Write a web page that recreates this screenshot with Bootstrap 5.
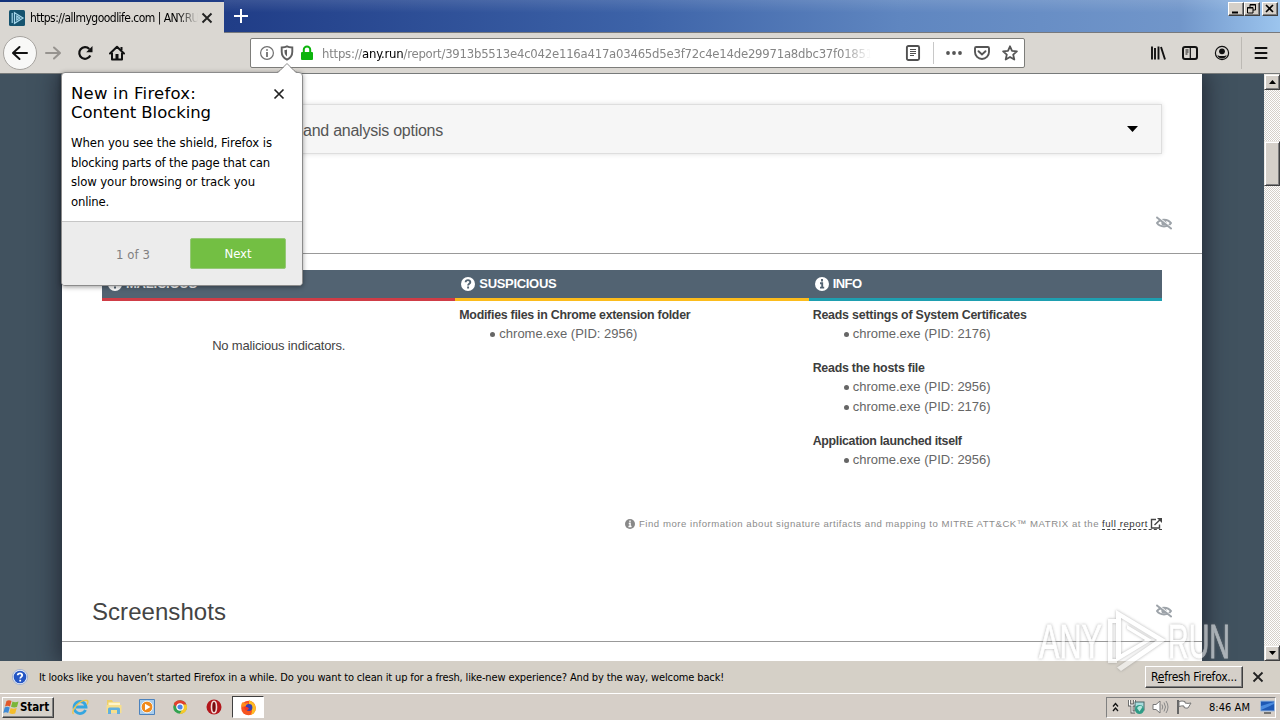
<!DOCTYPE html>
<html lang="en">
<head>
<meta charset="utf-8">
<title>ANY.RUN report</title>
<link href="https://cdn.jsdelivr.net/npm/bootstrap@5.3.0/dist/css/bootstrap.min.css" rel="stylesheet">
<style>
:root{--face:#d5d0c9;--chrome:#dad7d2}
body{width:1280px;height:720px;overflow:hidden;background:#d5cfc8;font-family:"DejaVu Sans Condensed","DejaVu Sans",sans-serif;font-stretch:condensed;font-size:11px;line-height:14px;color:#000}
svg{display:block;flex:none}
[data-w]{white-space:nowrap}
.titlebar{height:33px;background:linear-gradient(90deg,#12327a 0,#213e88 240px,#3d63a8 640px,#5f86c0 900px,#7196ca 1180px,#9cc5ee 1280px);border-bottom:1px solid #77797d}
.titlebar::before{content:"";position:absolute;left:224px;right:0;top:0;height:32px;background:linear-gradient(#ffffff1c,#fff0 40%)}
.tab-top{width:224px;height:31px;margin-top:2px;background:var(--chrome);position:relative;padding-left:9px}
.tab-label{width:168px;overflow:hidden;font-size:12px;margin-left:5px;-webkit-mask-image:linear-gradient(90deg,#000 148px,transparent 168px)}
.newtab{margin-left:9px}
.winbtn{width:16px;height:14px;background:var(--face);border:1px solid;border-color:#fff #404040 #404040 #fff;box-shadow:inset -1px -1px #808080}
.toolbar{height:41px;background:var(--chrome);border-bottom:1px solid #777a7a;padding-left:3px}
.backbtn{width:34px;height:34px;border-radius:50%;background:#f8f8f7;border:1px solid #a6a39f}
.urlbar{width:775px;height:30px;margin-left:125px;background:#fff;border:1px solid #7d7d7a;border-radius:2px;font-size:13px}
.urltext{width:550px;height:20px;line-height:21px;overflow:hidden;color:#858585;-webkit-mask-image:linear-gradient(90deg,#000 520px,transparent 549px)}
.viewport{height:587px;background:#41525f;overflow:hidden}
.sheet{width:1140px;margin-left:62px;background:#fff;box-shadow:0 0 22px 3px #1c202bd0;font-family:"Liberation Sans",Arial,sans-serif;font-size:13px;color:#666}
.option-panel{height:50px;margin:30px 40px 0;background:#f6f6f6;border:1px solid #dedede;box-shadow:0 0 5px #0002;font-size:16px;color:#555;padding:0 23px 0 200px}
.section-head{height:62px;border-bottom:1px solid #999;padding:0 30px;color:#444}
.ind-table{margin:16px 40px 0;height:240px}
.ind-head{height:31px;background:#526372;color:#fff;font-weight:700;border-bottom:3px solid;padding:0 0 1px 5px;gap:3px}
.b-red{border-color:#cf3c46}.b-amber{border-color:#fcbc1c}.b-teal{border-color:#1e9fb0}
.sig{padding:5px 0 0 4px}
.sig h6{font-size:12.4px;font-weight:700;line-height:19px;margin:0;color:#3d3d3d}
.sig ul{margin:-1px 0 15px;padding-left:40px;list-style:none}
.sig ul:not(:last-child){margin-bottom:15px}
.sig li{height:20px;line-height:20px;position:relative}
.sig li::before{content:"";position:absolute;left:-9px;top:8px;width:5px;height:5px;border-radius:50%;background:#666}
.more{height:28px;margin:0 40px;font-size:9.6px;color:#8c8c8c}
.more a{color:#333;text-decoration:none;border-bottom:1px dashed #444;height:12px;line-height:11px}
.scroller{width:16px;background:repeating-conic-gradient(#fff 0 25%,#d5d0c9 0 50%) 0 0/2px 2px}
.sbtn{width:16px;background:var(--face);border:1px solid;border-color:#ece9e4 #404040 #404040 #ece9e4;box-shadow:inset 1px 1px #fff,inset -1px -1px #808080}
.popup{left:61px;top:72px;width:242px;height:214px;background:#fff;border:1px solid #8b8b8b;border-radius:4px;box-shadow:0 1px 5px #0006;z-index:5;font-size:13px}
.popup .arrow{left:214px;top:-10px}
.popup h5{font-family:"DejaVu Sans",sans-serif;font-stretch:normal;font-size:16.5px;line-height:19px;font-weight:400;margin:0}
.popup p{line-height:19.7px;margin:11px 0 0}
.popup-foot{height:64px;background:#ececec;border-top:1px solid #c6c6c6;border-radius:0 0 3px 3px;color:#808080}
.nextbtn{width:96px;height:31px;background:#73bf43;border:1px solid #96c878;border-radius:2px;color:#fff;font-size:13px;padding:0}
.notice{height:32px;background:#d5d0c7;padding:0 16px 0 12px}
.raised{background:var(--face);border:1px solid;border-color:#fff #404040 #404040 #fff;box-shadow:inset -1px -1px #808080}
.refresh{width:98px;height:22px;font-size:12px}
.taskbar{height:27px;background:#d6cfc8;border-top:1px solid #fff;padding-left:2px}
.startbtn{width:52px;height:21px;font-size:11.5px;font-weight:700}
.active-task{width:32px;height:22px;background:#fff;border:1px solid;border-color:#404040 #fff #fff #404040}
.tray{width:170px;height:21px;border:1px solid;border-color:#808080 #fff #fff #808080}
.watermark{left:1036px;top:606px;z-index:6;width:200px;height:68px;pointer-events:none;opacity:.56;filter:drop-shadow(0 0 1.5px #777)}
</style>
</head>
<body class="d-flex flex-column position-relative">

<header class="titlebar d-flex flex-shrink-0 position-relative">
  <div class="tab-top d-flex align-items-center">
    <svg width="16" height="16" viewBox="0 0 16 16"><rect width="16" height="16" rx="1.500" fill="#15536f"/><path d="M3.200 3v10M5.500 2.700l8.500 5.300-8.500 5.300zM7.800 6l3 2-3 2z" fill="none" stroke="#a5d6ea" stroke-width="1.200"/></svg>
    <div class="tab-label"><span data-w="169">https://allmygoodlife.com | ANY.RU</span></div>
    <svg style="margin-left:3px" width="12" height="12" viewBox="0 0 12 12"><path d="M1.500 1.500l9 9M10.500 1.500l-9 9" stroke="#222" stroke-width="1.900"/></svg>
  </div>
  <svg class="newtab mt-2 position-relative" width="16" height="16" viewBox="0 0 16 16"><path d="M8 1v14M1 8h14" stroke="#fff" stroke-width="2"/></svg>
  <div class="d-flex ms-auto position-relative" style="padding:2px 2px 0 0">
    <div class="winbtn"><svg width="14" height="12"><path d="M3 9.500h6" stroke="#000" stroke-width="2"/></svg></div>
    <div class="winbtn"><svg width="14" height="12"><path d="M5 4V1.500h5.500V7H8M5 2h6M2.500 4.500H8V10H2.500zM2 5h6" fill="none" stroke="#000"/></svg></div>
    <div class="winbtn" style="margin-left:2px"><svg width="14" height="12"><path d="M3 2l7 7M10 2l-7 7" stroke="#000" stroke-width="1.600"/></svg></div>
  </div>
</header>

<nav class="toolbar d-flex align-items-center flex-shrink-0">
  <div class="backbtn d-flex align-items-center justify-content-center"><svg width="18" height="16" viewBox="0 0 18 16"><path d="M16 8H2.500M8.500 2L2 8l6.500 6" fill="none" stroke="#111" stroke-width="2" stroke-linecap="round" stroke-linejoin="round"/></svg></div>
  <svg style="margin-left:7px" width="18" height="16" viewBox="0 0 18 16"><path d="M2 8h13.500M10 2.500L16 8l-6 5.500" fill="none" stroke="#96938f" stroke-width="2" stroke-linecap="round" stroke-linejoin="round"/></svg>
  <svg style="margin-left:15px" width="16" height="16" viewBox="0 0 16 16"><path d="M13.300 10.500A5.800 5.800 0 1 1 12.300 4" fill="none" stroke="#111" stroke-width="2.200"/><path d="M15.500 1v6.300H9.200z" fill="#111"/></svg>
  <svg style="margin-left:16px" width="16" height="16" viewBox="0 0 16 16"><path d="M1 8.500L8 1.800l7 6.700M3 8v6.500h10V8" fill="none" stroke="#111" stroke-width="2" stroke-linejoin="round" stroke-linecap="round"/><path d="M6.500 9h3v6h-3zM11.500 2h2v3h-2z" fill="#111"/></svg>
  <div class="urlbar d-flex align-items-center ps-2">
    <svg width="16" height="16" viewBox="0 0 16 16"><circle cx="8" cy="8" r="6.400" fill="none" stroke="#707070" stroke-width="1.200"/><path d="M8 7v5M8 4.200v1.600" stroke="#707070" stroke-width="1.800"/></svg>
    <svg class="ms-1" width="16" height="16" viewBox="0 0 16 16"><path d="M8 1.400c1.600.8 3.300 1 5.300 1.100v4.200c0 3.300-2 6.300-5.300 7.900-3.300-1.600-5.300-4.600-5.300-7.900V2.500C4.700 2.400 6.400 2.200 8 1.400z" fill="none" stroke="#606060" stroke-width="1.900"/><path d="M8 4.500v7C6.200 10 5.500 8.500 5.500 6.500V5C6.500 5 7.200 4.900 8 4.500z" fill="#606060"/></svg>
    <svg class="ms-1" width="16" height="16" viewBox="0 0 16 16"><path d="M4.800 8V4.600a3.200 3.200 0 0 1 6.400 0V8" fill="none" stroke="#0cb40c" stroke-width="2"/><rect x="2" y="7" width="12" height="8" rx="1" fill="#0cb40c"/></svg>
    <div class="urltext" style="margin-left:7px"><span data-w="551">https://<span class="text-black">any.run</span>/report/3913b5513e4c042e116a417a03465d5e3f72c4e14de29971a8dbc37f01851</span></div>
    <svg style="margin-left:33px" width="16" height="16" viewBox="0 0 16 16"><rect x="1.900" y="1" width="12.200" height="14" rx="1.500" fill="none" stroke="#505050" stroke-width="1.900"/><path d="M5 4.500h6M5 6.500h6M5 8.500h6M5 10.500h4" stroke="#505050"/></svg>
    <div style="width:1px;height:22px;background:#c8c8c8;margin:0 11px 0 12px"></div>
    <svg width="18" height="16" viewBox="0 0 18 16"><g fill="#555"><circle cx="3" cy="8" r="1.900"/><circle cx="9" cy="8" r="1.900"/><circle cx="15" cy="8" r="1.900"/></g></svg>
    <svg style="margin-left:11px" width="16" height="16" viewBox="0 0 16 16"><path d="M2.200 2h11.600q1.200 0 1.200 1.200V7a7 7 0 0 1-14 0V3.200Q1 2 2.200 2z" fill="none" stroke="#555" stroke-width="1.900"/><path d="M4.500 6.200L8 9.500l3.500-3.300" fill="none" stroke="#555" stroke-width="1.900" stroke-linecap="round"/></svg>
    <svg style="margin-left:12px" width="16" height="16" viewBox="0 0 16 16"><path d="M8 1.300l2 4.500 4.900.5-3.700 3.300 1.100 4.900L8 12l-4.300 2.500 1.100-4.900L1.100 6.300 6 5.800z" fill="none" stroke="#555" stroke-width="1.800" stroke-linejoin="round"/></svg>
  </div>
  <svg style="margin-left:125px" width="16" height="16" viewBox="0 0 16 16"><path d="M2 1.500v13M5 3v11.500M8.500 1.500v13M11 2l4 12.500" stroke="#111" stroke-width="1.900"/></svg>
  <svg style="margin-left:16px" width="16" height="16" viewBox="0 0 16 16"><rect x="1" y="2" width="14" height="12" rx="2" fill="none" stroke="#111" stroke-width="2"/><path d="M8.300 2v12M3.500 5h3M3.500 7h3M3.500 9h2" stroke="#111" stroke-width="1.200"/></svg>
  <svg style="margin-left:16px" width="16" height="16" viewBox="0 0 16 16"><circle cx="8" cy="8" r="6.600" fill="none" stroke="#111" stroke-width="1.200"/><circle cx="8" cy="6.300" r="2.900" fill="#111"/><path d="M3.300 10.200c3 1.200 6.400 1.200 9.400 0-1 2.300-2.600 3.200-4.700 3.200s-3.700-.9-4.700-3.200z" fill="#111"/></svg>
  <div style="width:1px;height:32px;background:#bcb9b4;margin-left:11px"></div>
  <svg style="margin-left:11px" width="16" height="16" viewBox="0 0 16 16"><path d="M2.500 3h11M2.500 8h11M2.500 13h11" stroke="#111" stroke-width="2" stroke-linecap="round"/></svg>
</nav>

<main class="viewport d-flex flex-shrink-0">
  <article class="sheet">
    <div style="height:1px;margin-bottom:-1px"></div>
    <div class="option-panel d-flex align-items-center justify-content-between">
      <span class="pt-1" style="line-height:18px" data-w="140">and analysis options</span>
      <svg width="11" height="6"><path d="M0 0h11L5.500 6z" fill="#000"/></svg>
    </div>
    <div class="section-head d-flex align-items-center justify-content-end" style="margin-top:38px">
      <svg width="16" height="14" viewBox="0 0 16 14"><path d="M1 7C4 2.500 12 2.500 15 7c-3 4.500-11 4.500-14 0z" fill="none" stroke="#9da3a9" stroke-width="2"/><circle cx="8" cy="7" r="2.600" fill="#9da3a9"/><path d="M1.600 .6l15 12" stroke="#fff" stroke-width="1.500"/><path d="M.3 1l15.400 12" stroke="#9da3a9" stroke-width="1.900"/></svg>
    </div>
    <div class="ind-table row g-0 align-content-start">
      <div class="col-4">
        <div class="ind-head b-red d-flex align-items-center"><svg width="16" height="16" viewBox="0 0 16 16"><circle cx="8" cy="8" r="7" fill="#fff"/><path d="M8 3.500v5.500M8 10.500v2" stroke="#526372" stroke-width="2"/></svg><span data-w="71">MALICIOUS</span></div>
        <div class="text-center" style="padding-top:37px;line-height:16px;color:#444"><span data-w="133">No malicious indicators.</span></div>
      </div>
      <div class="col-4">
        <div class="ind-head b-amber d-flex align-items-center"><svg width="16" height="16" viewBox="0 0 16 16"><circle cx="8" cy="8" r="7" fill="#fff"/><path d="M5.600 6.200C5.800 3.400 10.400 3.500 10.300 6.200c0 1.500-2.200 1.600-2.200 3.200M8.100 10.400v2" fill="none" stroke="#526372" stroke-width="1.900"/></svg><span data-w="77">SUSPICIOUS</span></div>
        <div class="sig"><h6><span data-w="231">Modifies files in Chrome extension folder</span></h6><ul><li><span data-w="138">chrome.exe (PID: 2956)</span></li></ul></div>
      </div>
      <div class="col-4">
        <div class="ind-head b-teal d-flex align-items-center"><svg width="16" height="16" viewBox="0 0 16 16"><circle cx="8" cy="8" r="7" fill="#fff"/><path d="M8 3v2.400M6 7.200h2.200v4M6 11.600h4.200" fill="none" stroke="#526372" stroke-width="1.900"/></svg><span data-w="29">INFO</span></div>
        <div class="sig">
          <h6><span data-w="214">Reads settings of System Certificates</span></h6><ul><li><span data-w="138">chrome.exe (PID: 2176)</span></li></ul>
          <h6><span data-w="112">Reads the hosts file</span></h6><ul><li><span data-w="138">chrome.exe (PID: 2956)</span></li><li><span data-w="138">chrome.exe (PID: 2176)</span></li></ul>
          <h6><span data-w="149">Application launched itself</span></h6><ul><li><span data-w="138">chrome.exe (PID: 2956)</span></li></ul>
        </div>
      </div>
    </div>
    <div class="more d-flex align-items-center justify-content-end">
      <svg width="10" height="10" viewBox="0 0 16 16"><circle cx="8" cy="8" r="8" fill="#888"/><path d="M8 2.500v2.600M6 7.200h2.200v4M5.500 12h5" fill="none" stroke="#fff" stroke-width="2.200"/></svg>
      <span class="ms-1" style="margin-right:3px" data-w="460">Find more information about signature artifacts and mapping to MITRE ATT&amp;CK™ MATRIX at the</span>
      <a href="#" class="d-flex"><span data-w="46">full report</span><svg style="margin-left:2px" width="12" height="11" viewBox="0 0 12 11"><path d="M6 1.500H1.500V10H9.500V6.500M4.500 7L10 1.800" fill="none" stroke="#444" stroke-width="1.400"/><path d="M7 0h5v5z" fill="#444"/></svg></a>
    </div>
    <div class="section-head d-flex align-items-center justify-content-between" style="margin-top:42px">
      <span style="font-size:24px;line-height:30px;padding-top:2px" data-w="134">Screenshots</span>
      <svg width="16" height="14" viewBox="0 0 16 14"><path d="M1 7C4 2.500 12 2.500 15 7c-3 4.500-11 4.500-14 0z" fill="none" stroke="#9da3a9" stroke-width="2"/><circle cx="8" cy="7" r="2.600" fill="#9da3a9"/><path d="M1.600 .6l15 12" stroke="#fff" stroke-width="1.500"/><path d="M.3 1l15.400 12" stroke="#9da3a9" stroke-width="1.900"/></svg>
    </div>
  </article>
  <div class="scroller ms-auto d-flex flex-column position-relative">
    <div class="sbtn d-flex align-items-center justify-content-center" style="height:16px"><svg width="7" height="4"><path d="M0 4h7L3.500 0z"/></svg></div>
    <div class="sbtn" style="height:45px;margin-top:51px"></div>
    <div class="sbtn d-flex align-items-center justify-content-center mt-auto" style="height:16px"><svg width="7" height="4"><path d="M0 0h7L3.500 4z"/></svg></div>
  </div>
</main>

<div class="notice d-flex align-items-center flex-shrink-0">
  <svg width="16" height="16" viewBox="0 0 16 16"><circle cx="8" cy="8" r="7" fill="#2456c4" stroke="#e8eefa" stroke-width="1.300"/><circle cx="8" cy="8" r="7.600" fill="none" stroke="#7d93bd" stroke-width=".6"/><path d="M5.700 6.300c.1-2.700 4.500-2.600 4.500 0 0 1.500-2 1.600-2 3.200M8.200 10.800v1.700" fill="none" stroke="#fff" stroke-width="1.800"/></svg>
  <span style="margin-left:11px;padding-top:2px" data-w="685">It looks like you haven’t started Firefox in a while. Do you want to clean it up for a fresh, like-new experience? And by the way, welcome back!</span>
  <div class="raised refresh d-flex align-items-center justify-content-center ms-auto"><span data-w="86">R<u>e</u>fresh Firefox...</span></div>
  <svg style="margin-left:9px" width="12" height="12" viewBox="0 0 12 12"><path d="M1.500 1.500l9 9M10.500 1.500l-9 9" stroke="#222" stroke-width="1.800"/></svg>
</div>

<footer class="taskbar d-flex align-items-center flex-shrink-0">
  <div class="raised startbtn d-flex align-items-center">
    <svg width="17" height="16" viewBox="0 0 17 16"><path d="M3.500 2Q6 .5 8.500 2L7 7.500Q4.500 6 2 7.500z" fill="#e2582a"/><path d="M9.500 2.500Q12 4 15.500 2.500L14 8Q11 9 8 7.700z" fill="#7bb63b"/><path d="M1.700 8.500Q4 7 6.700 8.500L5.200 14Q3 12.500.3 14z" fill="#3f8ad6"/><path d="M7.700 9Q10 10.300 13.700 9L12.200 14.500Q9 15.500 6.200 14z" fill="#f4bd2c"/></svg>
    <span data-w="29">Start</span>
  </div>
  <svg style="margin-left:17px" width="18" height="18" viewBox="0 0 18 18"><path d="M14.500 12A6 6 0 1 1 15 9H5" fill="none" stroke="#35a6e0" stroke-width="2.800"/><path d="M2.500 16C-1 13 9 1 16 2.500c1.500.5 1 2.500 0 4" fill="none" stroke="#edc64f" stroke-width="1.400"/></svg>
  <svg style="margin-left:16px" width="18" height="18" viewBox="0 0 18 18"><path d="M2 2h5l1 2h7v11H2z" fill="#edcf6b"/><path d="M3.500 4.500H15V9H3.500z" fill="#fff5c9"/><path d="M1.500 7h15v8h-15z" fill="#f7df8c"/><path d="M3 16v-5q0-1.500 1.500-1.500h9Q15 9.500 15 11v5h-3v-4H6v4z" fill="#62b0de"/></svg>
  <svg style="margin-left:15px" width="18" height="18" viewBox="0 0 18 18"><path d="M1.500 1.500h15v15h-15z" fill="#a9cdec" stroke="#4c82bd"/><circle cx="9" cy="9" r="5.800" fill="#f08a1c" stroke="#fff" stroke-width=".8"/><path d="M7 5.700v6.600L12.500 9z" fill="#fff"/></svg>
  <svg style="margin-left:16px" width="16" height="18" viewBox="0 0 16 18"><circle cx="8" cy="9" r="6.800" fill="#32a350"/><path d="M1.700 6A7 7 0 0 1 14.500 7L8 6.500 5 10z" fill="#e2402f"/><path d="M14.600 6.600A7 7 0 0 1 7.600 16L11 10V6.500z" fill="#f7c92b"/><circle cx="8" cy="9" r="3.200" fill="#4a86e8" stroke="#fff" stroke-width="1.200"/></svg>
  <svg style="margin-left:18px" width="16" height="18" viewBox="0 0 16 18"><ellipse cx="8" cy="9" rx="7.500" ry="7.500" fill="#b3161b"/><ellipse cx="8" cy="9" rx="2.500" ry="5.800" fill="#7a0a0e" stroke="#f0d9d6" stroke-width="1.600"/></svg>
  <div class="active-task d-flex align-items-center justify-content-center" style="margin-left:10px"><svg width="17" height="17" viewBox="0 0 17 17"><circle cx="8.500" cy="9" r="7.300" fill="#f6541f"/><path d="M9 1q7 3 6.800 9a7.300 7.300 0 0 1-5 6Q14 9 9 6z" fill="#ffbd24"/><path d="M1.200 8Q1 4 3 3l2 1.500 3-.5-1 3z" fill="#ff8d1b"/><circle cx="9" cy="8.500" r="3.400" fill="#373fb4"/><path d="M4 8q3-1 5 1.500-1 2.500-4 1.500z" fill="#f6361f"/></svg></div>
  <div class="tray d-flex align-items-center ms-auto" style="margin-right:4px">
    <svg style="margin-left:5px" width="7" height="11"><path d="M1 4.500l2.500-3L6 4.500M1 9l2.500-3L6 9" fill="none" stroke="#111" stroke-width="1.300"/></svg>
    <svg style="margin-left:9px" width="17" height="16" viewBox="0 0 17 16"><path d="M1.500 1v5h5V1M4 6v7h3" fill="none" stroke="#555" stroke-width="2.800"/><path d="M1.500 1v5h5V1M4 6v7h3" fill="none" stroke="#fff" stroke-width="1.200"/><rect x="7" y="3" width="9" height="8" fill="#a9ddde" stroke="#446666"/><circle cx="11.500" cy="10.500" r="4.500" fill="#2f9c86"/><path d="M9 9q3-4 5.500-1l-3 4.500z" fill="#b5e5dc"/></svg>
    <svg style="margin-left:7px" width="17" height="16" viewBox="0 0 17 16"><path d="M1 5.500h3L8 2v12l-4-3.500H1z" fill="#fff" stroke="#777"/><path d="M10 5.500q1.500 2.500 0 5M12 3.500q3 4.500 0 9M14 2q4 6 0 12" fill="none" stroke="#888"/></svg>
    <svg style="margin-left:7px" width="17" height="16" viewBox="0 0 17 16"><path d="M2 1v14" stroke="#666" stroke-width="2"/><path d="M3 2.500q3-1 6 0v1.500q3 .8 6 0l-3 5q-2 .5-4-.5V7Q6 6.500 3 7.500z" fill="#fff" stroke="#777"/></svg>
    <span style="margin-left:16px;padding-top:1px" data-w="41">8:46 AM</span>
    <svg style="margin-left:10px" width="15" height="14" viewBox="0 0 15 14"><path d="M.5 1h14v10H.5z" fill="#1d58b5" stroke="#9cb9dd"/><path d="M1 10V6L14 2v2z" fill="#4b8bde"/><path d="M4 13h7" stroke="#555" stroke-width="1.500"/></svg>
  </div>
</footer>

<section class="popup position-absolute">
  <svg class="arrow position-absolute" width="22" height="11"><path d="M0 10.500Q2 10 4 8l7-7 7 7q2 2 4 2.500V11H0z" fill="#fff"/><path d="M0 9.700Q2.500 9 4 7.500l7-7 7 7q1.500 1.500 4 2.200" fill="none" stroke="#8b8b8b"/></svg>
  <div style="height:148px;padding:11px 9px 0 9px">
    <div class="d-flex justify-content-between align-items-start">
      <h5><span data-w="125">New in Firefox:</span><br><span data-w="140">Content Blocking</span></h5>
      <svg style="margin:4px 8px 0 0" width="12" height="12" viewBox="0 0 12 12"><path d="M1.500 1.500l9 9M10.500 1.500l-9 9" stroke="#222" stroke-width="1.700"/></svg>
    </div>
    <p><span data-w="201">When you see the shield, Firefox is</span><br><span data-w="199">blocking parts of the page that can</span><br><span data-w="184">slow your browsing or track you</span><br><span data-w="38">online.</span></p>
  </div>
  <div class="popup-foot d-flex align-items-center">
    <span style="margin-left:54px;padding-top:2px" data-w="34">1 of 3</span>
    <button class="nextbtn ms-auto" style="margin-right:16px"><span data-w="27">Next</span></button>
  </div>
</section>

<svg class="watermark position-absolute" viewBox="0 0 200 68">
  <g fill="#fff" stroke="#fff" stroke-width=".9" font-family="Liberation Sans Narrow, Liberation Sans, sans-serif" font-size="49">
    <text x="3" y="52" textLength="63" lengthAdjust="spacingAndGlyphs">ANY</text>
    <text x="132" y="52" textLength="62" lengthAdjust="spacingAndGlyphs">RUN</text>
    <path d="M72 13h9v4h-4.500v36H81v4h-9zM80 4l50 30-45 31-4-3.500L121 34 85 12v36l24-14-18-11v-4l25 15-36 22z" stroke="none" stroke-linejoin="round"/>
  </g>
</svg>

<script>
// Track each label out to its design width.
document.querySelectorAll('[data-w]').forEach(function (el) {
  var r = document.createRange();
  r.selectNodeContents(el);
  var n = el.textContent.length;
  el.style.letterSpacing = ((el.dataset.w - r.getBoundingClientRect().width) / n).toFixed(3) + 'px';
});
</script>
<script src="https://cdn.jsdelivr.net/npm/bootstrap@5.3.0/dist/js/bootstrap.bundle.min.js"></script>
</body>
</html>
